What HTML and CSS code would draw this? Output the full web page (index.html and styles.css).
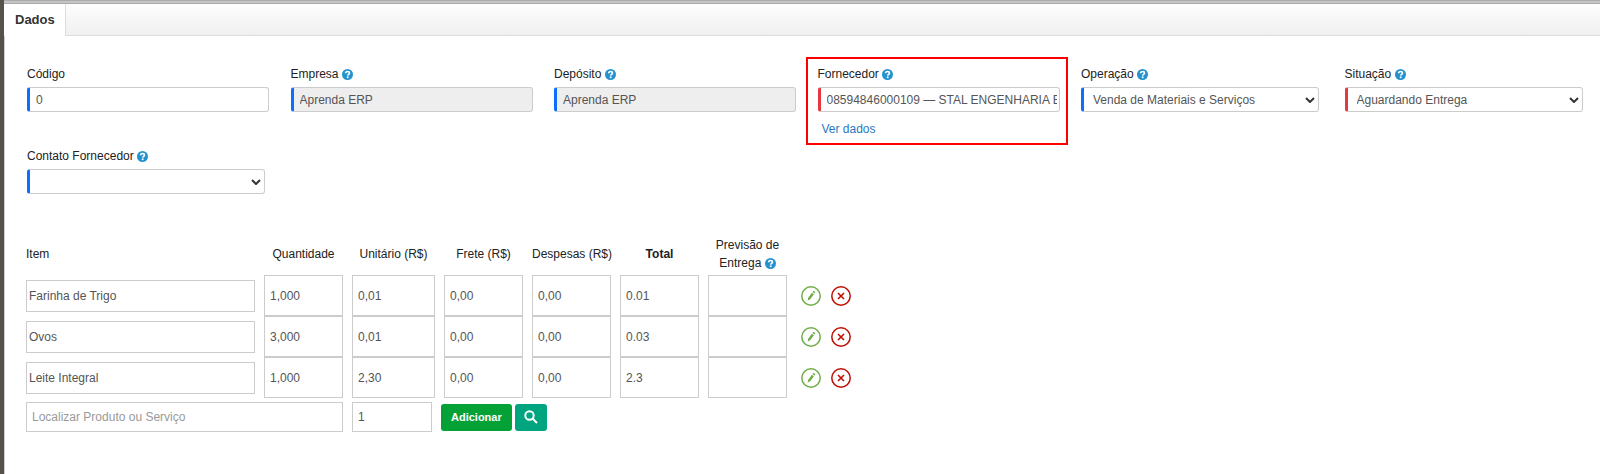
FILE: index.html
```html
<!DOCTYPE html>
<html lang="pt-BR">
<head>
    <meta charset="UTF-8">
    <meta name="viewport" content="width=device-width, initial-scale=1.0">
    <title>Pedido de Compra</title>
    <link rel="stylesheet" href="styles.css">
</head>
<body>

    <!-- icons shared by the form and the item table -->
    <svg class="sprite" aria-hidden="true">
        <symbol id="icon-help" viewBox="0 0 16 16">
            <circle cx="8" cy="8" r="8" fill="#2492cf"/>
            <path d="M5.3 6.3C5.3 4.6 6.5 3.7 8.1 3.7s2.7.9 2.7 2.3c0 1.9-2.4 1.9-2.5 3.700" fill="none" stroke="#fff" stroke-width="2.400"/>
            <rect x="7" y="10.800" width="2.500" height="2.500" fill="#fff"/>
        </symbol>
        <symbol id="icon-edit" viewBox="0 0 20 20">
            <circle cx="10" cy="10" r="9.200" fill="none" stroke="#70ad47" stroke-width="1.500"/>
            <path d="M6.700 14.600l.5-2.800 3.700-5 2 1.500-3.700 5zM11.500 6l.9-1.200 2 1.500-.9 1.200z" fill="#70ad47"/>
        </symbol>
        <symbol id="icon-remove" viewBox="0 0 20 20">
            <circle cx="10" cy="10" r="9.200" fill="none" stroke="#c00d00" stroke-width="1.500"/>
            <path d="M7 7l6 6M13 7l-6 6" fill="none" stroke="#c00d00" stroke-width="1.600"/>
        </symbol>
    </svg>

    <nav class="tabs">
        <a class="tab" href="#dados">Dados</a>
    </nav>

    <form class="panel" id="dados">
        <div class="fields">
            <div class="field">
                <label for="codigo">Código</label>
                <input class="control" type="text" id="codigo" value="0">
            </div>
            <div class="field">
                <label for="empresa">Empresa <svg class="help"><use href="#icon-help"/></svg></label>
                <input class="control" type="text" id="empresa" value="Aprenda ERP" readonly>
            </div>
            <div class="field">
                <label for="deposito">Depósito <svg class="help"><use href="#icon-help"/></svg></label>
                <input class="control" type="text" id="deposito" value="Aprenda ERP" readonly>
            </div>
            <div class="field highlight">
                <label for="fornecedor">Fornecedor <svg class="help"><use href="#icon-help"/></svg></label>
                <input class="control required" type="text" id="fornecedor" value="08594846000109 — STAL ENGENHARIA E">
                <a class="details" href="#fornecedor">Ver dados</a>
            </div>
            <div class="field">
                <label for="operacao">Operação <svg class="help"><use href="#icon-help"/></svg></label>
                <div class="select">
                    <select class="control" id="operacao"><option>Venda de Materiais e Serviços</option></select>
                    <svg class="chevron" viewBox="0 0 10 6"><path d="M1 1l4 4 4-4"/></svg>
                </div>
            </div>
            <div class="field">
                <label for="situacao">Situação <svg class="help"><use href="#icon-help"/></svg></label>
                <div class="select">
                    <select class="control required" id="situacao"><option>Aguardando Entrega</option></select>
                    <svg class="chevron" viewBox="0 0 10 6"><path d="M1 1l4 4 4-4"/></svg>
                </div>
            </div>
            <div class="field">
                <label for="contato">Contato Fornecedor <svg class="help"><use href="#icon-help"/></svg></label>
                <div class="select">
                    <select class="control" id="contato"><option></option></select>
                    <svg class="chevron" viewBox="0 0 10 6"><path d="M1 1l4 4 4-4"/></svg>
                </div>
            </div>
        </div>

        <table class="items">
            <colgroup>
                <col class="col-item">
                <col class="col-value">
                <col class="col-price">
                <col class="col-value">
                <col class="col-value">
                <col class="col-value">
                <col class="col-value">
                <col class="col-actions">
            </colgroup>
            <thead>
                <tr>
                    <th class="left">Item</th>
                    <th>Quantidade</th>
                    <th>Unitário (R$)</th>
                    <th>Frete (R$)</th>
                    <th>Despesas (R$)</th>
                    <th class="total">Total</th>
                    <th>Previsão de<br>Entrega <svg class="help"><use href="#icon-help"/></svg></th>
                    <td></td>
                </tr>
            </thead>
            <tbody>
                <tr>
                    <td><input class="name" type="text" value="Farinha de Trigo" aria-label="Item"></td>
                    <td><input type="text" value="1,000" aria-label="Quantidade"></td>
                    <td><input type="text" value="0,01" aria-label="Unitário"></td>
                    <td><input type="text" value="0,00" aria-label="Frete"></td>
                    <td><input type="text" value="0,00" aria-label="Despesas"></td>
                    <td><input type="text" value="0.01" aria-label="Total"></td>
                    <td><input type="text" value="" aria-label="Previsão de Entrega"></td>
                    <td>
                        <div class="actions">
                            <button type="button" aria-label="Editar"><svg><use href="#icon-edit"/></svg></button>
                            <button type="button" aria-label="Remover"><svg><use href="#icon-remove"/></svg></button>
                        </div>
                    </td>
                </tr>
                <tr>
                    <td><input class="name" type="text" value="Ovos" aria-label="Item"></td>
                    <td><input type="text" value="3,000" aria-label="Quantidade"></td>
                    <td><input type="text" value="0,01" aria-label="Unitário"></td>
                    <td><input type="text" value="0,00" aria-label="Frete"></td>
                    <td><input type="text" value="0,00" aria-label="Despesas"></td>
                    <td><input type="text" value="0.03" aria-label="Total"></td>
                    <td><input type="text" value="" aria-label="Previsão de Entrega"></td>
                    <td>
                        <div class="actions">
                            <button type="button" aria-label="Editar"><svg><use href="#icon-edit"/></svg></button>
                            <button type="button" aria-label="Remover"><svg><use href="#icon-remove"/></svg></button>
                        </div>
                    </td>
                </tr>
                <tr>
                    <td><input class="name" type="text" value="Leite Integral" aria-label="Item"></td>
                    <td><input type="text" value="1,000" aria-label="Quantidade"></td>
                    <td><input type="text" value="2,30" aria-label="Unitário"></td>
                    <td><input type="text" value="0,00" aria-label="Frete"></td>
                    <td><input type="text" value="0,00" aria-label="Despesas"></td>
                    <td><input type="text" value="2.3" aria-label="Total"></td>
                    <td><input type="text" value="" aria-label="Previsão de Entrega"></td>
                    <td>
                        <div class="actions">
                            <button type="button" aria-label="Editar"><svg><use href="#icon-edit"/></svg></button>
                            <button type="button" aria-label="Remover"><svg><use href="#icon-remove"/></svg></button>
                        </div>
                    </td>
                </tr>
            </tbody>
        </table>

        <div class="add-row">
            <input class="search" type="text" placeholder="Localizar Produto ou Serviço" aria-label="Localizar Produto ou Serviço">
            <input class="amount" type="text" value="1" aria-label="Quantidade">
            <div class="buttons">
                <button class="btn add" type="button">Adicionar</button>
                <button class="btn find" type="button" aria-label="Pesquisar">
                    <svg viewBox="0 0 14 14"><circle cx="5.500" cy="5.500" r="4.200"/><path d="M8.500 8.500l4.500 4.500"/></svg>
                </button>
            </div>
        </div>
    </form>

</body>
</html>
```

FILE: styles.css
```css
* {
    box-sizing: border-box;
}
body {
    display: flex;
    flex-direction: column;
    margin: 0;
    min-height: 100vh;
    border-left: 4px solid #55524a;
    background: #fff;
    font-family: "Liberation Sans", Arial, sans-serif;
    font-size: 12px;
    color: #222;
}
input, select, button {
    font: inherit;
    margin: 0;
}
.sprite {
    position: absolute;
    width: 0;
    height: 0;
}

/* tabs */
.tabs {
    display: flex;
    height: 36px;
    border-top: 4px double #aaa;
    border-bottom: 1px solid #ddd;
    background: linear-gradient(#fdfdfd, #f0f0f0) padding-box, #c4c4c4;
}
.tab {
    height: 32px;
    padding: 0 10px 0 11px;
    border-right: 1px solid #ddd;
    background: #fff;
    color: #333;
    font-size: 13px;
    font-weight: bold;
    line-height: 32px;
    text-decoration: none;
}

/* form */
.panel {
    flex: 1;
    padding: 28px 13px 0 21px;
    border-left: 1px solid #ccc;
}
.fields {
    display: grid;
    grid-template-columns: repeat(6, 1fr);
    column-gap: 21px;
    padding-left: 1px;
}
.field {
    position: relative;
    display: flex;
    flex-direction: column;
    align-items: flex-start;
}
.field label {
    height: 23px;
    line-height: 20px;
}
.help {
    width: 11px;
    height: 11px;
    vertical-align: -2px;
}
.control {
    width: 100%;
    height: 25px;
    padding: 0 2px 0 6px;
    border: 1px solid #ccc;
    border-left: 3px solid #0d6efd;
    border-radius: 3px;
    background: #fff;
    color: #555;
}
.control[readonly] {
    background: #eee;
}
.control.required {
    border-left-color: #e5383f;
}
.field input.control {
    max-width: 242px;
}
.select {
    position: relative;
    width: 100%;
    max-width: 238px;
}
.select .control {
    display: block;
    padding: 0 9px;
    appearance: none;
}
.chevron {
    position: absolute;
    top: 10px;
    right: 4px;
    width: 10px;
    height: 6px;
    fill: none;
    stroke: #333;
    stroke-width: 2;
    pointer-events: none;
}
.details {
    padding-left: 4px;
    color: #2a77bf;
    line-height: 34px;
    text-decoration: none;
}
.highlight::after {
    content: "";
    position: absolute;
    inset: -7px -8px 1px -12px;
    border: 2px solid #f00;
    pointer-events: none;
}

/* items */
.items {
    width: 834px;
    margin-top: 42px;
    border-spacing: 0;
    table-layout: fixed;
}
.col-item {
    width: 238px;
}
.col-value {
    width: 88px;
}
.col-price {
    width: 92px;
}
.items th {
    height: 39px;
    padding: 0 9px 3px 0;
    font-weight: normal;
    line-height: 18px;
    white-space: nowrap;
}
.items .left {
    text-align: left;
}
.items .total {
    font-weight: bold;
}
.items td {
    padding: 0 9px 0 0;
}
.items input, .add-row input {
    display: block;
    width: 100%;
    height: 41px;
    padding: 0 5px;
    border: 1px solid #ccc;
    color: #555;
}
.items .name {
    height: 32px;
    padding: 0 2px;
}
.actions {
    display: flex;
    gap: 10px;
    padding-left: 5px;
}
.actions button {
    width: 20px;
    height: 20px;
    padding: 0;
    border: 0;
    background: none;
}
.actions svg {
    display: block;
    width: 20px;
    height: 20px;
}
.add-row {
    display: flex;
    align-items: center;
    gap: 9px;
    margin-top: 4px;
}
.add-row input {
    height: 30px;
}
.add-row .search {
    width: 317px;
}
.add-row .amount {
    width: 80px;
}
.search::placeholder {
    color: #999;
}
.buttons {
    display: flex;
    gap: 3px;
}
.btn {
    height: 27px;
    padding: 0 10px;
    border: 0;
    border-radius: 3px;
    color: #fff;
    font-size: 11px;
    font-weight: bold;
}
.add {
    background: #04a137;
}
.find {
    padding: 0 9px;
    background: #00a580;
}
.find svg {
    display: block;
    width: 14px;
    height: 14px;
    fill: none;
    stroke: #fff;
    stroke-width: 2;
}
```
